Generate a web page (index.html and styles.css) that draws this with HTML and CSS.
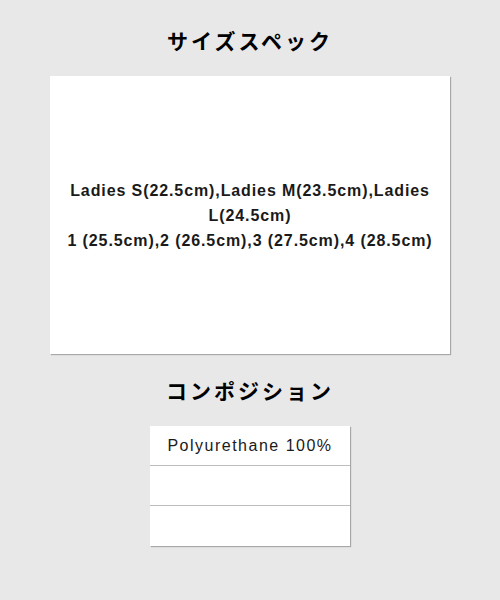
FILE: index.html
```html
<!DOCTYPE html>
<html lang="ja">
<head>
<meta charset="utf-8">
<link rel="stylesheet" href="styles.css">
</head>
<body>
<div class="page">
  <h2 class="title">サイズスペック</h2>
  <div class="size-panel">
    <p class="size-text">Ladies S(22.5cm),Ladies M(23.5cm),Ladies L(24.5cm)<br>1 (25.5cm),2 (26.5cm),3 (27.5cm),4 (28.5cm)</p>
  </div>
  <h2 class="title title-comp">コンポジション</h2>
  <div class="comp-table">
    <div class="comp-row">Polyurethane 100%</div>
    <div class="comp-row"></div>
    <div class="comp-row"></div>
  </div>
</div>
</body>
</html>
```

FILE: styles.css
```css
html, body {
  margin: 0;
  padding: 0;
  background: #e8e8e8;
}
.page {
  width: 500px;
  height: 600px;
  display: flex;
  flex-direction: column;
  align-items: center;
  font-family: "Liberation Sans", "Noto Sans CJK JP", sans-serif;
  color: #1a1a1a;
}
.title {
  margin: 26px 0 0;
  height: 28px;
  line-height: 28px;
  font-family: "Noto Sans CJK JP", sans-serif;
  font-size: 21px;
  font-weight: 700;
  letter-spacing: 3px;
  color: #000;
}
.size-panel {
  margin-top: 22px;
  width: 400px;
  height: 278px;
  background: #fff;
  box-shadow: 1px 1px 1px #a8a8a8;
  display: flex;
  align-items: center;
  justify-content: center;
}
.size-text {
  margin: 0;
  width: 390px;
  text-align: center;
  font-size: 16px;
  font-weight: 700;
  letter-spacing: 0.9px;
  line-height: 25px;
}
.title-comp {
  margin-top: 22px;
}
.comp-table {
  margin-top: 22px;
  width: 200px;
  background: #fff;
  box-shadow: 1px 1px 1px #a8a8a8;
}
.comp-row {
  height: 39px;
  border-bottom: 1px solid #bdbdbd;
  display: flex;
  align-items: center;
  justify-content: center;
  font-size: 16px;
  letter-spacing: 1.5px;
}
.comp-row:last-child {
  border-bottom: none;
  height: 40px;
}
```
